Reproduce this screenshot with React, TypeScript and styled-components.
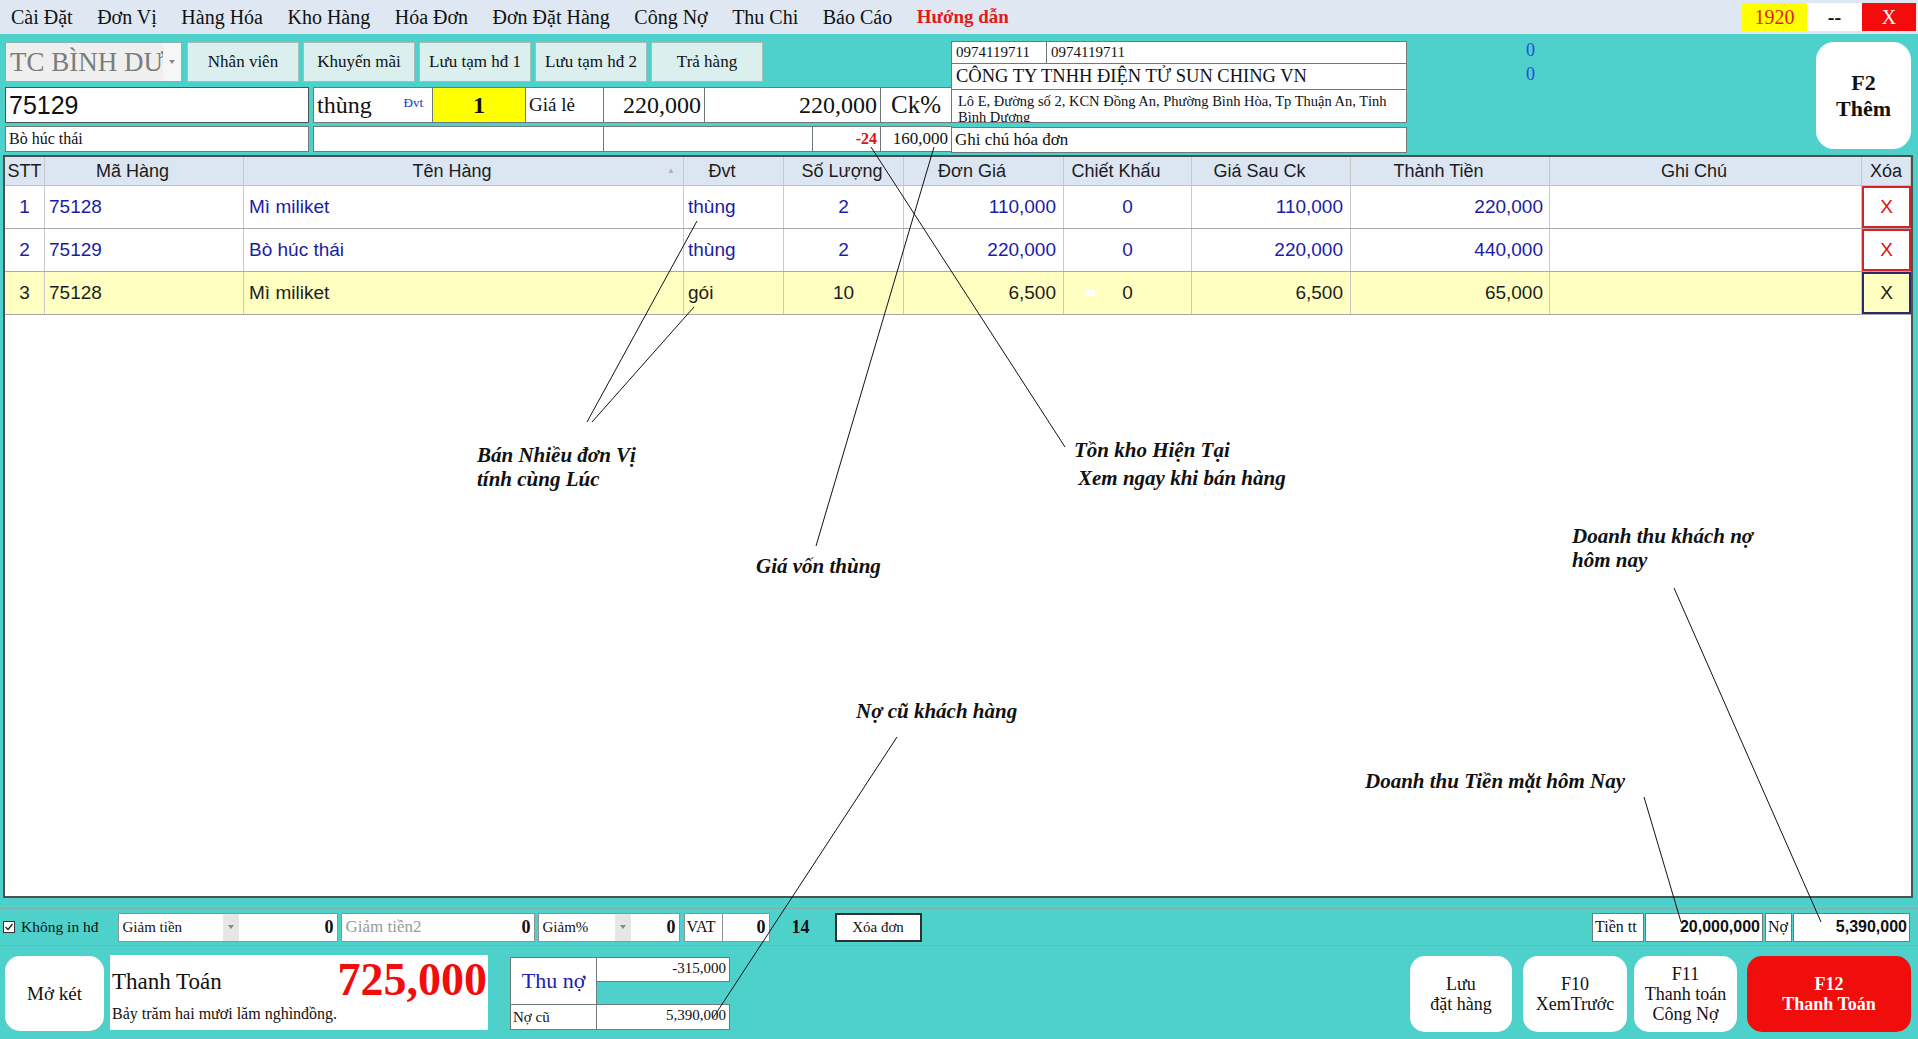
import React from 'react';
import styled, {createGlobalStyle} from 'styled-components';

const TEAL = '#4ed0cb';
const SERIF = `'Liberation Serif', 'Times New Roman', serif`;
const SANS = `'Liberation Sans', Arial, sans-serif`;
const NAVY = '#1c1ca6';

const GlobalStyle = createGlobalStyle`
  *, *::before, *::after { box-sizing: border-box; }
  html, body { margin: 0; padding: 0; background: ${TEAL}; }
  body { font-family: ${SERIF}; color: #111; }
`;

const Screen = styled.div`
  position: relative;
  width: 1918px;
  height: 1039px;
  overflow: hidden;
  display: flex;
  flex-direction: column;
  background: ${TEAL};
`;

/* ---------- menu bar ---------- */

const MenuBar = styled.div`
  flex: none;
  height: 34px;
  display: flex;
  align-items: center;
  padding-left: 11px;
  background: #dfe8f2;
`;

const MenuItem = styled.span<{$guide?: boolean}>`
  margin-right: 24.5px;
  font-size: ${p => (p.$guide ? '19px' : '20px')};
  font-weight: ${p => (p.$guide ? 700 : 400)};
  color: ${p => (p.$guide ? '#e21b1b' : '#111')};
`;

const WinControls = styled.div`
  margin-left: auto;
  margin-right: 2px;
  display: flex;
  height: 28px;
`;

const WinBox = styled.div<{$w: number; $bg: string; $fg: string; $bold?: boolean}>`
  width: ${p => p.$w}px;
  display: flex;
  align-items: center;
  justify-content: center;
  background: ${p => p.$bg};
  color: ${p => p.$fg};
  font-size: 20px;
  font-weight: ${p => (p.$bold ? 700 : 400)};
`;

/* ---------- top panel ---------- */

const TopPanel = styled.div`
  flex: none;
  height: 119px;
  display: flex;
  padding: 7px 7px 0 5px;
`;

const LeftBlock = styled.div`
  width: 946px;
  display: flex;
  flex-direction: column;
`;

const NavRow = styled.div`
  height: 40px;
  margin-top: 1px;
  display: flex;
  gap: 4px;
`;

const Combo = styled.div`
  width: 177px;
  margin-right: 1px;
  display: flex;
  align-items: center;
  background: #f6f6f6;
  border: 1px solid #8fb0ae;
  overflow: hidden;
`;

const ComboText = styled.span`
  width: 157px;
  height: 100%;
  display: flex;
  align-items: center;
  overflow: hidden;
  white-space: nowrap;
  padding-left: 4px;
  background: #efefef;
  font-size: 27px;
  color: #7c7c7c;
`;

const ComboArrow = styled.span`
  flex: 1;
  display: flex;
  justify-content: center;
`;

const TinyArrow = styled.span`
  width: 0;
  height: 0;
  border-left: 3px solid transparent;
  border-right: 3px solid transparent;
  border-top: 4px solid #888;
`;

const NavButton = styled.div`
  width: 112px;
  display: flex;
  align-items: center;
  justify-content: center;
  background: #daefee;
  border: 1px solid #a6bcbc;
  font-size: 17px;
  white-space: nowrap;
`;

const FieldRow = styled.div<{$h: number; $top: number}>`
  height: ${p => p.$h}px;
  margin-top: ${p => p.$top}px;
  display: flex;
`;

const Field = styled.div<{
  $w: number;
  $bg?: string;
  $align?: 'flex-start' | 'center' | 'flex-end' | 'space-between';
  $size?: number;
  $gap?: number;
}>`
  width: ${p => p.$w}px;
  flex: none;
  height: 100%;
  margin-right: ${p => p.$gap ?? -1}px;
  display: flex;
  align-items: center;
  justify-content: ${p => p.$align ?? 'flex-start'};
  padding: 0 3px;
  background: ${p => p.$bg ?? '#fff'};
  border: 1px solid #6f7b7b;
  font-size: ${p => p.$size ?? 16}px;
  white-space: nowrap;
  overflow: hidden;
`;

const CodeInput = styled(Field)`
  font-family: ${SANS};
  border-color: #4d5656;
`;

const UnitTag = styled.span`
  font-size: 13px;
  color: #1638c8;
  margin-right: 6px;
  margin-top: -4px;
`;

const Bold = styled.span<{$color?: string; $size?: number}>`
  font-weight: 700;
  color: ${p => p.$color ?? '#111'};
  font-size: ${p => (p.$size ? `${p.$size}px` : 'inherit')};
`;

const InfoBlock = styled.div`
  width: 456px;
  display: flex;
  flex-direction: column;
`;

const InfoTop = styled.div`
  height: 82px;
  display: flex;
  flex-direction: column;
  background: #fff;
  border: 1px solid #6f7b7b;
`;

const PhoneRow = styled.div`
  height: 22px;
  display: flex;
  font-size: 15px;
  border-bottom: 1px solid #6f7b7b;
`;

const PhoneCell = styled.div<{$w?: number}>`
  width: ${p => (p.$w ? `${p.$w}px` : 'auto')};
  flex: ${p => (p.$w ? 'none' : 1)};
  display: flex;
  align-items: center;
  padding-left: 4px;
  border-right: ${p => (p.$w ? '1px solid #6f7b7b' : 'none')};
`;

const CompanyRow = styled.div`
  height: 26px;
  display: flex;
  align-items: center;
  padding-left: 4px;
  font-size: 18.5px;
  white-space: nowrap;
  border-bottom: 1px solid #6f7b7b;
`;

const AddressRow = styled.div`
  flex: 1;
  overflow: hidden;
  padding: 3px 6px 0 6px;
  font-size: 14.5px;
  line-height: 16px;
`;

const InfoNote = styled.div`
  height: 26px;
  margin-top: 4px;
  display: flex;
  align-items: center;
  padding-left: 3px;
  background: #fff;
  border: 1px solid #6f7b7b;
  font-size: 17px;
`;

const ZeroCol = styled.div`
  flex: 1;
  margin-top: -3px;
  padding-left: 119px;
  font-size: 18px;
  line-height: 24px;
  color: #2050e0;
`;

const BigKey = styled.div`
  width: 95px;
  height: 107px;
  margin-top: 1px;
  display: flex;
  flex-direction: column;
  align-items: center;
  justify-content: center;
  background: #fff;
  border-radius: 18px;
  font-size: 22px;
  font-weight: 700;
  line-height: 26px;
`;

/* ---------- order table ---------- */

const COLS = '40px 199px 440px 100px 120px 160px 128px 159px 199px 312px 49px';

const Table = styled.div`
  flex: none;
  height: 743px;
  margin: 2px 5px 0 3px;
  background: #fff;
  border: 2px solid #4a5252;
  font-family: ${SANS};
`;

const GridRow = styled.div<{$head?: boolean; $active?: boolean}>`
  display: grid;
  grid-template-columns: ${COLS};
  height: ${p => (p.$head ? 29 : 43)}px;
  background: ${p => (p.$head ? '#dce6f2' : p.$active ? '#ffffc2' : '#fff')};
  border-bottom: 1px solid ${p => (p.$head ? '#b9c3cd' : '#a9a9a9')};
  color: ${p => (p.$head ? '#1b1b1b' : p.$active ? '#1d1d1d' : NAVY)};
  font-size: ${p => (p.$head ? 18 : 19)}px;
`;

const Cell = styled.div<{$align?: 'left' | 'center' | 'right'; $pad?: number; $padR?: number}>`
  position: relative;
  display: flex;
  align-items: center;
  justify-content: ${p =>
    p.$align === 'right' ? 'flex-end' : p.$align === 'left' ? 'flex-start' : 'center'};
  padding: 0 ${p => p.$padR ?? p.$pad ?? 5}px 0 ${p => p.$pad ?? 5}px;
  border-right: 1px solid #c9c9c9;
  white-space: nowrap;
  overflow: hidden;
`;

const SortMark = styled.span`
  position: absolute;
  right: 8px;
  top: 9px;
  font-size: 8px;
  color: #b0b0b0;
`;

const DeleteCell = styled.div<{$active?: boolean}>`
  display: flex;
  align-items: center;
  justify-content: center;
  border: 2px solid ${p => (p.$active ? '#2a2a6a' : '#d42424')};
  color: ${p => (p.$active ? '#1d1d1d' : '#e01010')};
  font-size: 19px;
`;

const Caret = styled.span`
  position: absolute;
  left: 22px;
  top: 18px;
  width: 9px;
  height: 6px;
  background: #fff;
`;

/* ---------- discount / totals strip ---------- */

const ControlsRow = styled.div`
  flex: none;
  height: 38px;
  margin-top: 10px;
  display: flex;
  align-items: center;
  padding: 0 8px 0 3px;
  border-top: 1px solid #7fb1ae;
  border-bottom: 1px solid #7fb1ae;
`;

const CheckLabel = styled.label`
  display: flex;
  align-items: center;
  gap: 6px;
  font-size: 15.5px;
  margin-right: 19px;
`;

const CheckBox = styled.span`
  width: 12px;
  height: 12px;
  display: flex;
  align-items: center;
  justify-content: center;
  background: #fff;
  border: 1px solid #333;
`;

const InputBox = styled.div<{$w: number; $gap?: number}>`
  width: ${p => p.$w}px;
  height: 29px;
  margin-right: ${p => p.$gap ?? 3}px;
  display: flex;
  align-items: center;
  background: #fff;
  border: 1px solid #8b9595;
`;

const BoxLabel = styled.span<{$w?: number; $muted?: boolean; $size?: number}>`
  width: ${p => (p.$w ? `${p.$w}px` : 'auto')};
  padding-left: 4px;
  font-size: ${p => p.$size ?? 15}px;
  color: ${p => (p.$muted ? '#9a9a9a' : '#111')};
  white-space: nowrap;
`;

const DropArrow = styled.span`
  width: 16px;
  height: 100%;
  display: flex;
  align-items: center;
  justify-content: center;
  background: #e6e6e6;
`;

const BoxValue = styled.span`
  margin-left: auto;
  padding-right: 3px;
  font-size: 18px;
  font-weight: 700;
`;

const VatSplit = styled.span`
  width: 38px;
  height: 100%;
  display: flex;
  align-items: center;
  padding-left: 2px;
  font-size: 16px;
  border-right: 1px solid #8b9595;
`;

const Counter = styled.span`
  margin: 0 25px 0 22px;
  font-size: 18px;
  font-weight: 700;
`;

const PlainButton = styled.div`
  width: 87px;
  height: 29px;
  display: flex;
  align-items: center;
  justify-content: center;
  background: #fff;
  border: 2px solid #2f2f2f;
  font-size: 15px;
`;

const Totals = styled.div`
  margin-left: auto;
  display: flex;
  gap: 2px;
  height: 29px;
`;

const TotalCell = styled.div<{$w: number; $value?: boolean}>`
  width: ${p => p.$w}px;
  display: flex;
  align-items: center;
  justify-content: ${p => (p.$value ? 'flex-end' : 'flex-start')};
  padding: 0 2px;
  margin-right: ${p => (p.$value ? 0 : -1)}px;
  background: #fff;
  border: 1px solid #6f7b7b;
  font-family: ${p => (p.$value ? SANS : SERIF)};
  font-weight: ${p => (p.$value ? 700 : 400)};
  font-size: 16px;
`;

/* ---------- bottom action row ---------- */

const BottomRow = styled.div`
  flex: 1;
  display: flex;
  align-items: flex-start;
  padding: 10px 7px 0 5px;
`;

const RoundButton = styled.div<{$w: number; $danger?: boolean; $gap?: number}>`
  width: ${p => p.$w}px;
  height: 76px;
  margin-right: ${p => p.$gap ?? 0}px;
  display: flex;
  flex-direction: column;
  align-items: center;
  justify-content: center;
  text-align: center;
  background: ${p => (p.$danger ? '#f20d0d' : '#fff')};
  color: ${p => (p.$danger ? '#fff' : '#111')};
  font-weight: ${p => (p.$danger ? 700 : 400)};
  border-radius: 15px;
  font-size: 18px;
  line-height: 20px;
`;

const DrawerButton = styled(RoundButton)`
  height: 75px;
  font-size: 19px;
`;

const PayPanel = styled.div`
  width: 378px;
  height: 75px;
  margin: -1px 22px 0 6px;
  display: flex;
  flex-direction: column;
  padding: 0 1px 0 2px;
  background: #fff;
`;

const PayTop = styled.div`
  height: 50px;
  display: flex;
  align-items: center;
  justify-content: space-between;
`;

const PayTitle = styled.span`
  font-size: 23px;
  margin-top: 4px;
`;

const PayAmount = styled.span`
  font-size: 46px;
  font-weight: 700;
  color: #f20d0d;
  line-height: 46px;
`;

const PayWords = styled.span`
  font-size: 16px;
`;

const DebtGrid = styled.div`
  width: 219px;
  height: 72px;
  margin-top: 1px;
  display: grid;
  grid-template-columns: 86px 133px;
  grid-template-rows: 24px 23px 25px;
`;

const DebtCell = styled.div<{$span?: boolean; $right?: boolean; $size?: number; $color?: string}>`
  grid-row: ${p => (p.$span ? 'span 2' : 'auto')};
  display: flex;
  align-items: ${p => (p.$span ? 'center' : p.$right ? 'flex-start' : 'center')};
  justify-content: ${p => (p.$span ? 'center' : p.$right ? 'flex-end' : 'flex-start')};
  padding: ${p => (p.$right ? '2px 3px 0 0' : '0 2px')};
  background: #fff;
  border: 1px solid #6f7b7b;
  margin: 0 -1px -1px 0;
  font-size: ${p => p.$size ?? 15}px;
  color: ${p => p.$color ?? '#111'};
`;

const DebtGap = styled.div``;

const ActionGroup = styled.div`
  margin-left: auto;
  display: flex;
`;

/* ---------- annotation layer ---------- */

const Overlay = styled.svg`
  position: absolute;
  left: 0;
  top: 0;
  pointer-events: none;
`;

const Note = styled.div<{$x: number; $y: number}>`
  position: absolute;
  left: ${p => p.$x}px;
  top: ${p => p.$y}px;
  font-size: 21px;
  font-style: italic;
  font-weight: 700;
  line-height: 24px;
  white-space: nowrap;
  color: #111;
`;

interface OrderLine {
  stt: number;
  code: string;
  name: string;
  unit: string;
  qty: string;
  price: string;
  ck: string;
  after: string;
  total: string;
}

const orderLines: OrderLine[] = [
  {stt: 1, code: '75128', name: 'Mì miliket', unit: 'thùng', qty: '2', price: '110,000', ck: '0', after: '110,000', total: '220,000'},
  {stt: 2, code: '75129', name: 'Bò húc thái', unit: 'thùng', qty: '2', price: '220,000', ck: '0', after: '220,000', total: '440,000'},
  {stt: 3, code: '75128', name: 'Mì miliket', unit: 'gói', qty: '10', price: '6,500', ck: '0', after: '6,500', total: '65,000'},
];

// headers with the room the grid keeps on their right for a sort glyph
const headers: [string, number][] = [
  ['STT', 2],
  ['Mã Hàng', 25],
  ['Tên Hàng', 25],
  ['Đvt', 25],
  ['Số Lượng', 5],
  ['Đơn Giá', 25],
  ['Chiết Khấu', 25],
  ['Giá Sau Ck', 25],
  ['Thành Tiền', 25],
  ['Ghi Chú', 25],
  ['Xóa', 2],
];

const menus = ['Cài Đặt', 'Đơn Vị', 'Hàng Hóa', 'Kho Hàng', 'Hóa Đơn', 'Đơn Đặt Hàng', 'Công Nợ', 'Thu Chi', 'Báo Cáo'];

const pointers: [number, number, number, number][] = [
  [697, 221, 587, 422],
  [694, 307, 592, 422],
  [871, 147, 1065, 447],
  [934, 147, 816, 546],
  [897, 737, 713, 1018],
  [1674, 588, 1821, 922],
  [1644, 797, 1681, 922],
];

const Annotations: React.FC = () => (
  <>
    <Overlay width={1918} height={1039}>
      {pointers.map(([x1, y1, x2, y2], i) => (
        <line key={i} x1={x1} y1={y1} x2={x2} y2={y2} stroke='#111' strokeWidth={1} />
      ))}
    </Overlay>
    <Note $x={477} $y={443}>
      Bán Nhiều đơn Vị
      <br />
      tính cùng Lúc
    </Note>
    <Note $x={1074} $y={438}>Tồn kho Hiện Tại</Note>
    <Note $x={1078} $y={466}>Xem ngay khi bán hàng</Note>
    <Note $x={756} $y={554}>Giá vốn thùng</Note>
    <Note $x={856} $y={699}>Nợ cũ khách hàng</Note>
    <Note $x={1572} $y={524}>
      Doanh thu khách nợ
      <br />
      hôm nay
    </Note>
    <Note $x={1365} $y={769}>Doanh thu Tiền mặt hôm Nay</Note>
  </>
);

const OrderTable: React.FC = () => (
  <Table>
    <GridRow $head>
      {headers.map(([h, room]) => (
        <Cell key={h} $pad={2} $padR={room}>
          {h}
          {h === 'Tên Hàng' && <SortMark>▲</SortMark>}
        </Cell>
      ))}
    </GridRow>
    {orderLines.map(l => {
      const active = l.stt === 3;
      return (
        <GridRow key={l.stt} $active={active}>
          <Cell>{l.stt}</Cell>
          <Cell $align='left' $pad={4}>{l.code}</Cell>
          <Cell $align='left' $pad={5}>{l.name}</Cell>
          <Cell $align='left' $pad={4}>{l.unit}</Cell>
          <Cell>{l.qty}</Cell>
          <Cell $align='right' $pad={7}>{l.price}</Cell>
          <Cell>
            {active && <Caret />}
            {l.ck}
          </Cell>
          <Cell $align='right' $pad={7}>{l.after}</Cell>
          <Cell $align='right' $pad={6}>{l.total}</Cell>
          <Cell />
          <DeleteCell $active={active}>X</DeleteCell>
        </GridRow>
      );
    })}
  </Table>
);

export default function App() {
  return (
    <>
      <GlobalStyle />
      <Screen>
        <MenuBar>
          {menus.map(m => (
            <MenuItem key={m}>{m}</MenuItem>
          ))}
          <MenuItem $guide>Hướng dẫn</MenuItem>
          <WinControls>
            <WinBox $w={65} $bg='#ffff00' $fg='#e01a1a'>1920</WinBox>
            <WinBox $w={55} $bg='#fff' $fg='#111' $bold>--</WinBox>
            <WinBox $w={54} $bg='#f40c0c' $fg='#fff'>X</WinBox>
          </WinControls>
        </MenuBar>

        <TopPanel>
          <LeftBlock>
            <NavRow>
              <Combo>
                <ComboText>TC BÌNH DƯ</ComboText>
                <ComboArrow>
                  <TinyArrow />
                </ComboArrow>
              </Combo>
              <NavButton>Nhân viên</NavButton>
              <NavButton>Khuyến mãi</NavButton>
              <NavButton>Lưu tạm hđ 1</NavButton>
              <NavButton>Lưu tạm hđ 2</NavButton>
              <NavButton>Trả hàng</NavButton>
            </NavRow>

            <FieldRow $h={36} $top={5}>
              <CodeInput $w={304} $gap={4} $size={25}>75129</CodeInput>
              <Field $w={120} $size={24} $align='space-between'>
                thùng
                <UnitTag>Đvt</UnitTag>
              </Field>
              <Field $w={94} $bg='#ffff00' $align='center'>
                <Bold $size={24}>1</Bold>
              </Field>
              <Field $w={79} $size={19}>Giá lẻ</Field>
              <Field $w={102} $size={24} $align='flex-end'>220,000</Field>
              <Field $w={177} $size={24} $align='flex-end'>220,000</Field>
              <Field $w={72} $size={25} $align='center'>Ck%</Field>
            </FieldRow>

            <FieldRow $h={26} $top={3}>
              <Field $w={304} $gap={4} $size={16}>Bò húc thái</Field>
              <Field $w={291} />
              <Field $w={210} />
              <Field $w={69} $align='flex-end'>
                <Bold $color='#e01010' $size={16}>-24</Bold>
              </Field>
              <Field $w={72} $size={17} $align='flex-end'>160,000</Field>
            </FieldRow>
          </LeftBlock>

          <InfoBlock>
            <InfoTop>
              <PhoneRow>
                <PhoneCell $w={95}>0974119711</PhoneCell>
                <PhoneCell>0974119711</PhoneCell>
              </PhoneRow>
              <CompanyRow>CÔNG TY TNHH ĐIỆN TỬ SUN CHING VN</CompanyRow>
              <AddressRow>
                Lô E, Đường số 2, KCN Đồng An, Phường Bình Hòa, Tp Thuận An, Tỉnh Bình Dương
              </AddressRow>
            </InfoTop>
            <InfoNote>Ghi chú hóa đơn</InfoNote>
          </InfoBlock>

          <ZeroCol>
            0
            <br />0
          </ZeroCol>

          <BigKey>
            <span>F2</span>
            <span>Thêm</span>
          </BigKey>
        </TopPanel>

        <OrderTable />

        <ControlsRow>
          <CheckLabel>
            <CheckBox>
              <svg width='10' height='10' viewBox='0 0 10 10'>
                <polyline points='1.5,5 4,7.5 8.5,2' fill='none' stroke='#222' strokeWidth='1.3' />
              </svg>
            </CheckBox>
            Không in hđ
          </CheckLabel>
          <InputBox $w={220}>
            <BoxLabel $w={104}>Giảm tiền</BoxLabel>
            <DropArrow>
              <TinyArrow />
            </DropArrow>
            <BoxValue>0</BoxValue>
          </InputBox>
          <InputBox $w={194}>
            <BoxLabel $muted $size={17}>Giảm tiền2</BoxLabel>
            <BoxValue>0</BoxValue>
          </InputBox>
          <InputBox $w={142} $gap={4}>
            <BoxLabel $w={76}>Giảm%</BoxLabel>
            <DropArrow>
              <TinyArrow />
            </DropArrow>
            <BoxValue>0</BoxValue>
          </InputBox>
          <InputBox $w={86} $gap={0}>
            <VatSplit>VAT</VatSplit>
            <BoxValue>0</BoxValue>
          </InputBox>
          <Counter>14</Counter>
          <PlainButton>Xóa đơn</PlainButton>

          <Totals>
            <TotalCell $w={52}>Tiền tt</TotalCell>
            <TotalCell $w={118} $value>20,000,000</TotalCell>
            <TotalCell $w={27}>Nợ</TotalCell>
            <TotalCell $w={117} $value>5,390,000</TotalCell>
          </Totals>
        </ControlsRow>

        <BottomRow>
          <DrawerButton $w={99}>Mở két</DrawerButton>
          <PayPanel>
            <PayTop>
              <PayTitle>Thanh Toán</PayTitle>
              <PayAmount>725,000</PayAmount>
            </PayTop>
            <PayWords>Bảy trăm hai mươi lăm nghìnđồng.</PayWords>
          </PayPanel>
          <DebtGrid>
            <DebtCell $span $size={22} $color='#2121b0'>Thu nợ</DebtCell>
            <DebtCell $right>-315,000</DebtCell>
            <DebtGap />
            <DebtCell>Nợ cũ</DebtCell>
            <DebtCell $right>5,390,000</DebtCell>
          </DebtGrid>

          <ActionGroup>
            <RoundButton $w={102} $gap={11}>
              <span>Lưu</span>
              <span>đặt hàng</span>
            </RoundButton>
            <RoundButton $w={104} $gap={7}>
              <span>F10</span>
              <span>XemTrước</span>
            </RoundButton>
            <RoundButton $w={103} $gap={10}>
              <span>F11</span>
              <span>Thanh toán</span>
              <span>Công Nợ</span>
            </RoundButton>
            <RoundButton $w={164} $danger>
              <span>F12</span>
              <span>Thanh Toán</span>
            </RoundButton>
          </ActionGroup>
        </BottomRow>

        <Annotations />
      </Screen>
    </>
  );
}
